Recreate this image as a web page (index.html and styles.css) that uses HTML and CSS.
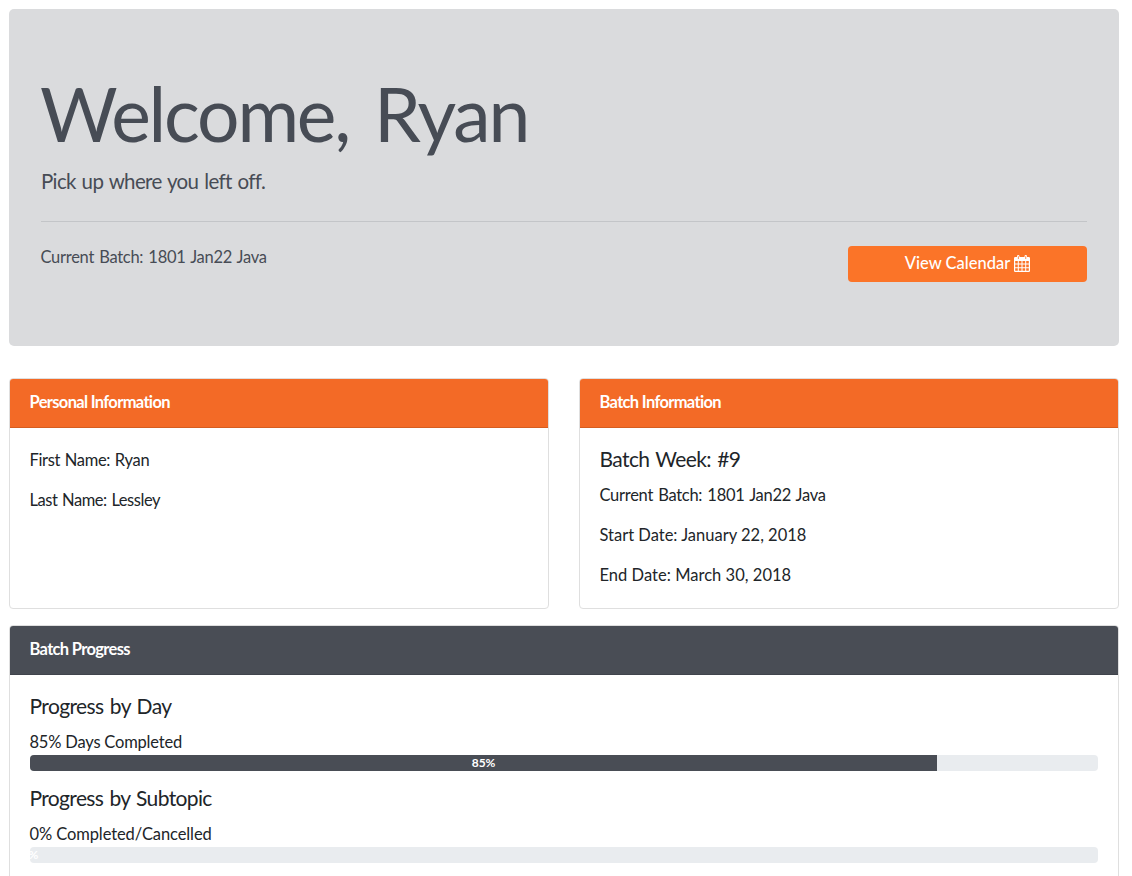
FILE: index.html
```html
<!DOCTYPE html>
<html lang="en">
<head>
<meta charset="utf-8">
<title>Dashboard</title>
<link rel="stylesheet" href="styles.css">
</head>
<body>
<main class="page">
  <section class="hero">
    <h1 class="hero-title">Welcome, Ryan</h1>
    <p class="hero-lead">Pick up where you left off.</p>
    <hr class="hero-rule">
    <div class="hero-row">
      <p class="t-batch">Current Batch: 1801 Jan22 Java</p>
      <a class="button"><span>View Calendar</span>
        <svg class="calendar" viewBox="0 0 16 17" width="16" height="17"><path fill="#fff" fill-rule="evenodd" d="M1.200 2H3V1.200Q3 0 4.200 0T5.500 1.200V2H10.500V1.200Q10.500 0 11.800 0T13 1.200V2H14.800Q16 2 16 3.200V15.800Q16 17 14.800 17H1.200Q0 17 0 15.800V3.200Q0 2 1.200 2ZM3.900 1.200V4H4.700V1.200ZM11.400 1.200V4H12.200V1.200ZM1.200 6V8.400H3.800V6ZM4.800 6V8.400H7.500V6ZM8.500 6V8.400H11.200V6ZM12.200 6V8.400H14.800V6ZM1.200 9.400V12.200H3.800V9.400ZM4.800 9.400V12.200H7.500V9.400ZM8.500 9.400V12.200H11.200V9.400ZM12.200 9.400V12.200H14.800V9.400ZM1.200 13.200V15.800H3.800V13.200ZM4.800 13.200V15.800H7.500V13.200ZM8.500 13.200V15.800H11.200V13.200ZM12.200 13.200V15.800H14.800V13.200Z"/></svg>
      </a>
    </div>
  </section>
  <div class="cards">
    <section class="card">
      <header class="card-header">Personal Information</header>
      <div class="card-body">
        <p class="t-first">First Name: Ryan</p>
        <p class="t-last">Last Name: Lessley</p>
      </div>
    </section>
    <section class="card">
      <header class="card-header">Batch Information</header>
      <div class="card-body">
        <h5>Batch Week: #9</h5>
        <p class="t-batch">Current Batch: 1801 Jan22 Java</p>
        <p>Start Date: January 22, 2018</p>
        <p class="t-end">End Date: March 30, 2018</p>
      </div>
    </section>
  </div>
  <section class="card">
    <header class="card-header dark">Batch Progress</header>
    <div class="card-body">
      <h5>Progress by Day</h5>
      <div class="label t-days">85% Days Completed</div>
      <div class="track"><div class="bar" style="width:84.94%">85%</div></div>
      <h5 class="t-sub">Progress by Subtopic</h5>
      <div class="label t-cancel">0% Completed/Cancelled</div>
      <div class="track"><div class="bar" style="width:0%">0%</div></div>
    </div>
  </section>
</main>
</body>
</html>
```
FILE: styles.css
```css
* { box-sizing: border-box; }
body { margin: 0; background: #fff; color: #212529; font: 16.5px/24px Lato, sans-serif; height: 876px; overflow: hidden; }
h1, h5, p { margin: 0; font-weight: 400; }
.page { padding: 9px 13px 0 9px; }
.hero { height: 337px; padding: 61px 32px 64px; margin-bottom: 32px; border-radius: 5px; background: #dadbdd; color: #474c55; }
.hero-title { font-size: 75px; line-height: 86px; margin: 0 0 10px -1px; letter-spacing: -2.2px; word-spacing: 8px; white-space: nowrap; }
.hero-lead { font-size: 20.5px; line-height: 30px; letter-spacing: -.64px; word-spacing: 1.2px; }
.hero-rule { margin: 25px 0 24px; border: 0; border-top: 1px solid #c3c5c8; }
.hero-row { display: flex; justify-content: space-between; }
.hero-row .t-batch { margin: -1px 0 0 -.5px; }
.button { display: flex; align-items: center; justify-content: center; gap: 4px; width: 239px; height: 36px; padding-bottom: 2px; border-radius: 4px; background: #fb7428; color: #fff; font-weight: 500; }
.cards { display: grid; grid-template-columns: 1fr 1fr; gap: 30px; margin-bottom: 16px; }
.card { border: 1px solid #dfdfdf; border-radius: 4px; overflow: hidden; }
.card-header { height: 49px; padding: 11px 19.5px; border-bottom: 1px solid #d55d20; background: #f36a26; color: #fff; font-size: 16.5px; line-height: 24px; font-weight: 700; letter-spacing: -.67px; }
.dark { background: #494d55; border-color: #40444c; }
.card-body { padding: 20px 20px 21px 19.5px; }
p + p { margin-top: 16px; }
h5 { font-size: 21px; line-height: 24px; margin: -1px 0 12px; letter-spacing: -.6px; word-spacing: 1.4px; }
.label { height: 25px; }
.track { height: 16px; margin: 0 0 16px .5px; overflow: hidden; border-radius: 4px; background: #e9ecef; display: flex; }
.bar { display: flex; justify-content: center; background: #494d55; color: #fff; font-size: 12px; line-height: 16px; font-weight: 700; }
.t-batch { letter-spacing: -.28px; word-spacing: 1.2px; }
.t-first { letter-spacing: -.36px; word-spacing: 1px; }
.t-last { letter-spacing: -.47px; word-spacing: 1px; }
.t-end { letter-spacing: .03px; }
.t-days { letter-spacing: -.2px; }
.t-sub { letter-spacing: -.64px; }
.t-cancel { letter-spacing: -.1px; }
```
